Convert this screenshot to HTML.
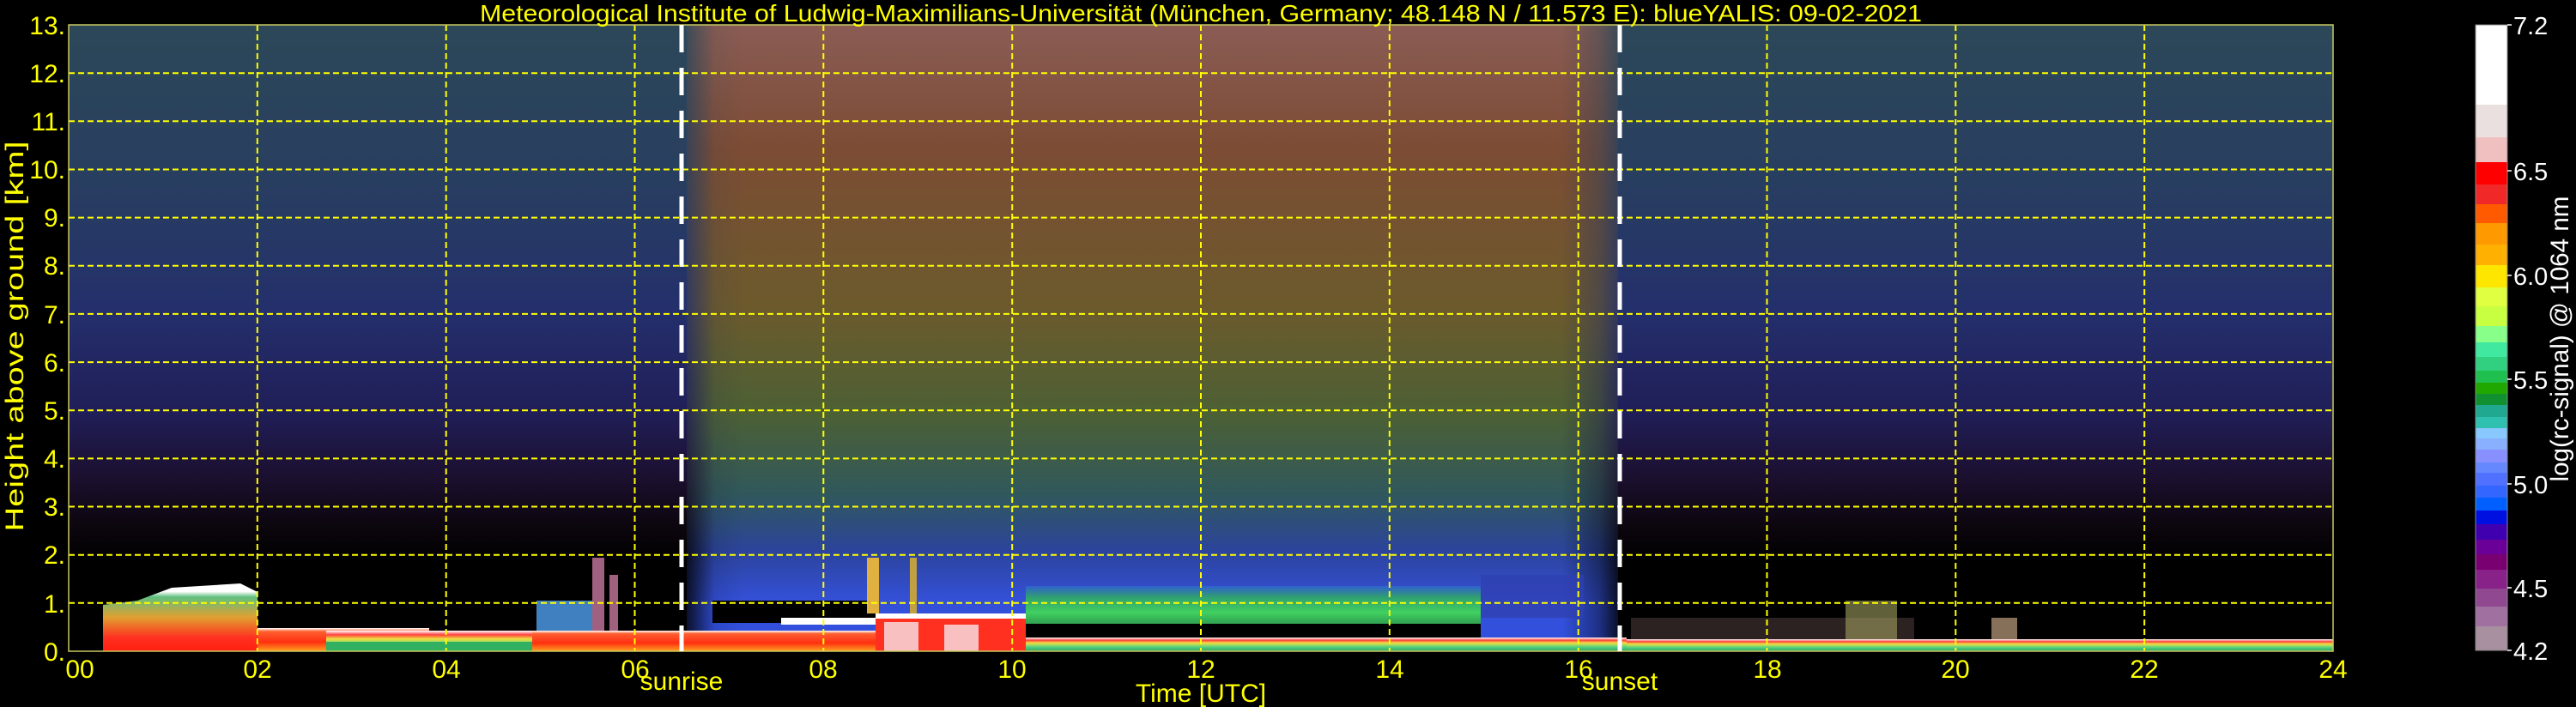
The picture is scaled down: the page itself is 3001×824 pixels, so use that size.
<!DOCTYPE html>
<html><head><meta charset="utf-8"><style>
html,body{margin:0;padding:0;background:#000;width:3001px;height:824px;overflow:hidden}
svg{display:block}
text{font-family:"Liberation Sans","DejaVu Sans",sans-serif}
</style></head><body>
<svg width="3001" height="824" viewBox="0 0 3001 824" xmlns="http://www.w3.org/2000/svg">
<defs>
<linearGradient id="night" x1="0" y1="29" x2="0" y2="759" gradientUnits="userSpaceOnUse">
<stop offset="0" stop-color="#2c4858"/>
<stop offset="0.25" stop-color="#283e60"/>
<stop offset="0.45" stop-color="#24306c"/>
<stop offset="0.62" stop-color="#201e58"/>
<stop offset="0.72" stop-color="#1c1030"/>
<stop offset="0.8" stop-color="#0c060e"/>
<stop offset="0.86" stop-color="#000"/>
<stop offset="1" stop-color="#000"/>
</linearGradient>
<linearGradient id="day" x1="0" y1="29" x2="0" y2="759" gradientUnits="userSpaceOnUse">
<stop offset="0" stop-color="#8a5c54"/>
<stop offset="0.2" stop-color="#7c4c34"/>
<stop offset="0.45" stop-color="#6c5a2c"/>
<stop offset="0.62" stop-color="#4c6034"/>
<stop offset="0.75" stop-color="#30585c"/>
<stop offset="0.84" stop-color="#2c449c"/>
<stop offset="0.92" stop-color="#3450d8"/>
<stop offset="1" stop-color="#3050e0"/>
</linearGradient>
<linearGradient id="dayfade" x1="800" y1="0" x2="1885" y2="0" gradientUnits="userSpaceOnUse">
<stop offset="0" stop-color="#fff" stop-opacity="0.2"/>
<stop offset="0.03" stop-color="#fff" stop-opacity="0.9"/>
<stop offset="0.06" stop-color="#fff" stop-opacity="1"/>
<stop offset="0.94" stop-color="#fff" stop-opacity="1"/>
<stop offset="0.98" stop-color="#fff" stop-opacity="0.6"/>
<stop offset="1" stop-color="#fff" stop-opacity="0.2"/>
</linearGradient>
<mask id="m"><rect x="800" y="29" width="1085" height="730" fill="url(#dayfade)"/></mask>
<linearGradient id="cb" x1="0" y1="29" x2="0" y2="758" gradientUnits="userSpaceOnUse">
<stop offset="0" stop-color="#fff"/><stop offset="0.1276" stop-color="#fff"/>
<stop offset="0.1276" stop-color="#ebe0e0"/><stop offset="0.1797" stop-color="#ebe0e0"/>
<stop offset="0.1797" stop-color="#f0c0c0"/><stop offset="0.2195" stop-color="#f0c0c0"/>
<stop offset="0.2195" stop-color="#ff0000"/><stop offset="0.2551" stop-color="#ff0000"/>
<stop offset="0.2551" stop-color="#f02828"/><stop offset="0.2867" stop-color="#f02828"/>
<stop offset="0.2867" stop-color="#ff5a00"/><stop offset="0.3169" stop-color="#ff5a00"/>
<stop offset="0.3169" stop-color="#ff9900"/><stop offset="0.3512" stop-color="#ff9900"/>
<stop offset="0.3512" stop-color="#ffb000"/><stop offset="0.3841" stop-color="#ffb000"/>
<stop offset="0.3841" stop-color="#ffe600"/><stop offset="0.4198" stop-color="#ffe600"/>
<stop offset="0.4198" stop-color="#e0ff40"/><stop offset="0.4499" stop-color="#e0ff40"/>
<stop offset="0.4499" stop-color="#c8ff40"/><stop offset="0.4815" stop-color="#c8ff40"/>
<stop offset="0.4815" stop-color="#88ff88"/><stop offset="0.5075" stop-color="#88ff88"/>
<stop offset="0.5075" stop-color="#40e8a0"/><stop offset="0.5309" stop-color="#40e8a0"/>
<stop offset="0.5309" stop-color="#30d080"/><stop offset="0.5528" stop-color="#30d080"/>
<stop offset="0.5528" stop-color="#20c050"/><stop offset="0.5720" stop-color="#20c050"/>
<stop offset="0.5720" stop-color="#20a800"/><stop offset="0.5898" stop-color="#20a800"/>
<stop offset="0.5898" stop-color="#109030"/><stop offset="0.6077" stop-color="#109030"/>
<stop offset="0.6077" stop-color="#20a890"/><stop offset="0.6269" stop-color="#20a890"/>
<stop offset="0.6269" stop-color="#30c0b0"/><stop offset="0.6447" stop-color="#30c0b0"/>
<stop offset="0.6447" stop-color="#88c8ff"/><stop offset="0.6612" stop-color="#88c8ff"/>
<stop offset="0.6612" stop-color="#88b0ff"/><stop offset="0.6790" stop-color="#88b0ff"/>
<stop offset="0.6790" stop-color="#8890ff"/><stop offset="0.6996" stop-color="#8890ff"/>
<stop offset="0.6996" stop-color="#6688ff"/><stop offset="0.7160" stop-color="#6688ff"/>
<stop offset="0.7160" stop-color="#5070ff"/><stop offset="0.7366" stop-color="#5070ff"/>
<stop offset="0.7366" stop-color="#3366ff"/><stop offset="0.7558" stop-color="#3366ff"/>
<stop offset="0.7558" stop-color="#0060ff"/><stop offset="0.7764" stop-color="#0060ff"/>
<stop offset="0.7764" stop-color="#0010e0"/><stop offset="0.7984" stop-color="#0010e0"/>
<stop offset="0.7984" stop-color="#4000b0"/><stop offset="0.8230" stop-color="#4000b0"/>
<stop offset="0.8230" stop-color="#6a0098"/><stop offset="0.8464" stop-color="#6a0098"/>
<stop offset="0.8464" stop-color="#780070"/><stop offset="0.8711" stop-color="#780070"/>
<stop offset="0.8711" stop-color="#882288"/><stop offset="0.9012" stop-color="#882288"/>
<stop offset="0.9012" stop-color="#904890"/><stop offset="0.9300" stop-color="#904890"/>
<stop offset="0.9300" stop-color="#a070a0"/><stop offset="0.9616" stop-color="#a070a0"/>
<stop offset="0.9616" stop-color="#a890a0"/><stop offset="1" stop-color="#a890a0"/>
</linearGradient>
<linearGradient id="redband" x1="0" y1="0" x2="0" y2="1">
<stop offset="0" stop-color="#ffffff"/><stop offset="0.15" stop-color="#ff6030"/><stop offset="0.6" stop-color="#ff3010"/><stop offset="1" stop-color="#ffa020"/>
</linearGradient>
<linearGradient id="greenband" x1="0" y1="0" x2="0" y2="1">
<stop offset="0" stop-color="#ffffff"/><stop offset="0.2" stop-color="#ff4040"/><stop offset="0.4" stop-color="#f0e040"/><stop offset="0.7" stop-color="#50d080"/><stop offset="1" stop-color="#30a060"/>
</linearGradient>
<linearGradient id="cloud1" x1="0" y1="0" x2="0" y2="1">
<stop offset="0" stop-color="#ffffff"/><stop offset="0.12" stop-color="#ffffff"/><stop offset="0.2" stop-color="#60c080"/><stop offset="0.5" stop-color="#e0a030"/><stop offset="0.8" stop-color="#ff3020"/><stop offset="1" stop-color="#ff2010"/>
</linearGradient>
<linearGradient id="greenday" x1="0" y1="0" x2="0" y2="1">
<stop offset="0" stop-color="#3060d0"/><stop offset="0.3" stop-color="#30a070"/><stop offset="0.7" stop-color="#40d060"/><stop offset="1" stop-color="#30a050"/>
</linearGradient>
</defs>

<rect x="80" y="29" width="2638" height="730" fill="url(#night)"/>
<rect x="800" y="29" width="1085" height="730" fill="url(#day)" mask="url(#m)"/>

<polygon points="120,705 160,700 200,685 280,680 300,690 300,759 120,759" fill="url(#cloud1)"/>
<rect x="300" y="732" width="200" height="27" fill="url(#redband)"/>
<rect x="380" y="735" width="520" height="24" fill="url(#greenband)"/>
<rect x="380" y="748" width="520" height="11" fill="#30b060"/>
<rect x="620" y="735" width="280" height="24" fill="url(#redband)"/>
<rect x="625" y="700" width="70" height="35" fill="#4080c0"/>
<rect x="690" y="650" width="14" height="85" fill="#a06080"/>
<rect x="710" y="670" width="10" height="65" fill="#a06080"/>
<rect x="900" y="735" width="120" height="24" fill="url(#redband)"/>
<rect x="830" y="700" width="190" height="26" fill="#000"/>
<rect x="910" y="720" width="110" height="8" fill="#ffffff"/>
<rect x="1020" y="715" width="190" height="44" fill="#ff3020"/>
<rect x="1020" y="715" width="190" height="6" fill="#ffffff"/>
<rect x="1030" y="725" width="40" height="34" fill="#f8c0c0"/>
<rect x="1100" y="728" width="40" height="31" fill="#f8c0c0"/>
<rect x="1010" y="650" width="14" height="65" fill="#e0b040"/>
<rect x="1060" y="650" width="8" height="65" fill="#c0a040"/>
<rect x="1210" y="728" width="90" height="31" fill="#f8a020"/>
<rect x="1195" y="683" width="530" height="44" fill="url(#greenday)"/>
<rect x="1195" y="727" width="530" height="16" fill="#000"/>
<rect x="1195" y="743" width="700" height="16" fill="url(#greenband)"/>
<rect x="1725" y="670" width="120" height="50" fill="#3040b0" opacity="0.8"/>
<rect x="1895" y="745" width="823" height="14" fill="url(#greenband)"/>
<rect x="1900" y="720" width="330" height="25" fill="#806060" opacity="0.35"/>
<rect x="2150" y="700" width="60" height="45" fill="#a0a060" opacity="0.6"/>
<rect x="2320" y="720" width="30" height="25" fill="#c0a080" opacity="0.7"/>

<g stroke="#ffff00" stroke-width="2" stroke-dasharray="7,4" fill="none">
<line x1="80" y1="702.8" x2="2718" y2="702.8"/>
<line x1="80" y1="646.7" x2="2718" y2="646.7"/>
<line x1="80" y1="590.5" x2="2718" y2="590.5"/>
<line x1="80" y1="534.4" x2="2718" y2="534.4"/>
<line x1="80" y1="478.2" x2="2718" y2="478.2"/>
<line x1="80" y1="422.1" x2="2718" y2="422.1"/>
<line x1="80" y1="365.9" x2="2718" y2="365.9"/>
<line x1="80" y1="309.8" x2="2718" y2="309.8"/>
<line x1="80" y1="253.6" x2="2718" y2="253.6"/>
<line x1="80" y1="197.5" x2="2718" y2="197.5"/>
<line x1="80" y1="141.3" x2="2718" y2="141.3"/>
<line x1="80" y1="85.2" x2="2718" y2="85.2"/>
<line x1="299.8" y1="29" x2="299.8" y2="759"/>
<line x1="519.7" y1="29" x2="519.7" y2="759"/>
<line x1="739.5" y1="29" x2="739.5" y2="759"/>
<line x1="959.3" y1="29" x2="959.3" y2="759"/>
<line x1="1179.2" y1="29" x2="1179.2" y2="759"/>
<line x1="1399" y1="29" x2="1399" y2="759"/>
<line x1="1618.8" y1="29" x2="1618.8" y2="759"/>
<line x1="1838.7" y1="29" x2="1838.7" y2="759"/>
<line x1="2058.5" y1="29" x2="2058.5" y2="759"/>
<line x1="2278.3" y1="29" x2="2278.3" y2="759"/>
<line x1="2498.2" y1="29" x2="2498.2" y2="759"/>
</g>
<rect x="80" y="29" width="2638" height="730" fill="none" stroke="#c8c860" stroke-width="1.5"/>

<g stroke="#ffffff" stroke-width="5" stroke-dasharray="32,18">
<line x1="794" y1="29" x2="794" y2="759"/>
<line x1="1887" y1="29" x2="1887" y2="759"/>
</g>

<g fill="#ffff00" font-size="30" text-anchor="end">
<text x="76" y="770">0.</text>
<text x="76" y="714">1.</text>
<text x="76" y="657">2.</text>
<text x="76" y="601">3.</text>
<text x="76" y="545">4.</text>
<text x="76" y="489">5.</text>
<text x="76" y="433">6.</text>
<text x="76" y="377">7.</text>
<text x="76" y="320">8.</text>
<text x="76" y="264">9.</text>
<text x="76" y="208">10.</text>
<text x="76" y="152">11.</text>
<text x="76" y="96">12.</text>
<text x="76" y="40">13.</text>
</g>
<g fill="#ffff00" font-size="30" text-anchor="middle">
<text x="93" y="790">00</text>
<text x="300" y="790">02</text>
<text x="520" y="790">04</text>
<text x="740" y="790">06</text>
<text x="959" y="790">08</text>
<text x="1179" y="790">10</text>
<text x="1399" y="790">12</text>
<text x="1619" y="790">14</text>
<text x="1839" y="790">16</text>
<text x="2059" y="790">18</text>
<text x="2278" y="790">20</text>
<text x="2498" y="790">22</text>
<text x="2718" y="790">24</text>
<text x="794" y="804">sunrise</text>
<text x="1887" y="804">sunset</text>
<text x="1399" y="818">Time [UTC]</text>
<text x="1399" y="25" font-size="28" textLength="1680" lengthAdjust="spacingAndGlyphs">Meteorological Institute of Ludwig-Maximilians-Universität (München, Germany; 48.148 N / 11.573 E):    blueYALIS: 09-02-2021</text>
</g>
<text transform="translate(27,392) rotate(-90)" fill="#ffff00" font-size="30" text-anchor="middle" textLength="455" lengthAdjust="spacingAndGlyphs">Height above ground [km]</text>

<rect x="2884" y="29" width="37" height="729" fill="url(#cb)" stroke="#888" stroke-width="1"/>
<g stroke="#fff" stroke-width="1.5">
<line x1="2921" y1="29" x2="2926" y2="29"/>
<line x1="2921" y1="199" x2="2926" y2="199"/>
<line x1="2921" y1="321" x2="2926" y2="321"/>
<line x1="2921" y1="442" x2="2926" y2="442"/>
<line x1="2921" y1="564" x2="2926" y2="564"/>
<line x1="2921" y1="685" x2="2926" y2="685"/>
<line x1="2921" y1="758" x2="2926" y2="758"/>
</g>
<g fill="#ffffff" font-size="29">
<text x="2928" y="40">7.2</text>
<text x="2928" y="210">6.5</text>
<text x="2928" y="332">6.0</text>
<text x="2928" y="453">5.5</text>
<text x="2928" y="575">5.0</text>
<text x="2928" y="696">4.5</text>
<text x="2928" y="769">4.2</text>
</g>
<text transform="translate(2992,395) rotate(-90)" fill="#ffffff" font-size="30" text-anchor="middle" textLength="333" lengthAdjust="spacingAndGlyphs">log(rc-signal) @ 1064 nm</text>
</svg>
</body></html>
